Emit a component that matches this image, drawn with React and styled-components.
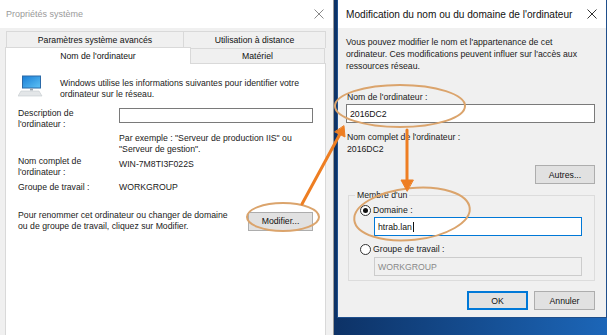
import React from 'react';
import styled, { createGlobalStyle } from 'styled-components';

const GlobalStyle = createGlobalStyle`
  html, body {
    margin: 0;
    padding: 0;
  }
  body {
    width: 607px;
    height: 335px;
    overflow: hidden;
    background: linear-gradient(90deg, #0a2450 0%, #0d3266 55%, #1c66b8 100%);
    font-family: "Liberation Sans", Arial, sans-serif;
    color: #1a1a1a;
  }
`;

const Desktop = styled.div`
  position: relative;
  display: flex;
  align-items: flex-start;
  gap: 3px;
  width: 607px;
  height: 335px;
`;

const Window = styled.div`
  display: flex;
  flex-direction: column;
  flex: 0 0 ${(p) => p.$w}px;
  height: ${(p) => p.$h}px;
  box-sizing: border-box;
  background: #f0f0f0;
  border-right: 1px solid ${(p) => p.$edge};
  border-left: ${(p) => (p.$framed ? `1px solid ${p.$edge}` : 'none')};
  border-bottom: ${(p) => (p.$framed ? `1px solid ${p.$edge}` : 'none')};
`;

const TitleBar = styled.div`
  display: flex;
  align-items: center;
  justify-content: space-between;
  height: 28px;
  flex: 0 0 28px;
  padding: 0 9px 0 ${(p) => (p.$inactive ? 6 : 8)}px;
  background: #fff;
  color: ${(p) => (p.$inactive ? '#9a9a9a' : '#111')};
  font-size: ${(p) => (p.$inactive ? 9 : 10.1)}px;
`;

const CloseIcon = ({ color }) => (
  <svg width="10" height="10" viewBox="0 0 10 10">
    <path d="M0.5 0.5 L9.5 9.5 M9.5 0.5 L0.5 9.5" stroke={color} strokeWidth="1" fill="none" />
  </svg>
);

const LeftBody = styled.div`
  display: flex;
  flex-direction: column;
  flex: 1;
  padding: 3px 7px 0 5px;
`;

const TabRow = styled.div`
  display: flex;
  height: ${(p) => p.$h}px;
  padding-left: ${(p) => p.$indent}px;
`;

const Tab = styled.div`
  flex: 0 0 ${(p) => p.$w}px;
  box-sizing: border-box;
  display: flex;
  align-items: center;
  justify-content: center;
  border: 1px solid #d9d9d9;
  border-bottom: none;
  margin-left: -1px;
  background: ${(p) => (p.$active ? '#fff' : '#f0f0f0')};
  font-size: 8.7px;
  color: #111;
  position: relative;
  z-index: ${(p) => (p.$active ? 2 : 1)};
  height: ${(p) => (p.$active ? 'calc(100% + 2px)' : '100%')};
  margin-top: ${(p) => (p.$active ? '-1px' : '0')};
  &:first-child {
    margin-left: 0;
  }
`;

const Panel = styled.div`
  flex: 1;
  background: #fff;
  border: 1px solid #d9d9d9;
  border-bottom: none;
  padding: 11px 12px 0 12px;
  font-size: 8.7px;
  line-height: 11px;
`;

const Intro = styled.div`
  display: flex;
  align-items: flex-start;
  gap: 16px;
`;

const IntroText = styled.div`
  padding-top: 3px;
`;

const FieldRow = styled.div`
  display: grid;
  grid-template-columns: 101px 1fr;
  margin-top: ${(p) => p.$mt}px;
`;

const Value = styled.div`
  padding-top: ${(p) => p.$pt || 0}px;
`;

const TextBox = styled.div`
  box-sizing: border-box;
  height: ${(p) => p.$h}px;
  border: 1px solid ${(p) => (p.$focus ? '#0078d7' : p.$disabled ? '#cccccc' : '#7a7a7a')};
  background: ${(p) => (p.$disabled ? '#f0f0f0' : '#fff')};
  color: ${(p) => (p.$disabled ? '#8a8a8a' : '#111')};
  padding: 0 3px;
  display: flex;
  align-items: center;
  font-size: 8.7px;
  margin-top: ${(p) => p.$mt || 0}px;
  margin-left: ${(p) => p.$ml || 0}px;
`;

const Caret = styled.span`
  display: inline-block;
  width: 1px;
  height: 10px;
  background: #111;
  margin-left: 1px;
`;

const RenameRow = styled.div`
  display: flex;
  align-items: center;
  justify-content: space-between;
  margin-top: 17px;
`;

const Button = styled.div`
  box-sizing: border-box;
  flex: 0 0 ${(p) => p.$w}px;
  width: ${(p) => p.$w}px;
  height: ${(p) => p.$h}px;
  display: flex;
  align-items: center;
  justify-content: center;
  background: #e1e1e1;
  border: 1px solid ${(p) => (p.$default ? '#0078d7' : '#adadad')};
  box-shadow: ${(p) => (p.$default ? 'inset 0 0 0 1px #0078d7' : 'none')};
  font-size: 8.7px;
  color: #111;
`;

const RightBody = styled.div`
  display: flex;
  flex-direction: column;
  flex: 1;
  padding: 8px 11px 0 8px;
  font-size: 8.7px;
  line-height: 12px;
`;

const Block = styled.div`
  margin-top: ${(p) => p.$mt || 0}px;
  padding-left: ${(p) => p.$pl || 0}px;
`;

const RightAlign = styled.div`
  display: flex;
  justify-content: flex-end;
  gap: 6px;
  margin-top: ${(p) => p.$mt}px;
`;

const GroupBox = styled.fieldset`
  margin: 5px 0 0 2px;
  padding: 0 12px 10px 11px;
  border: 1px solid #dcdcdc;
  height: 92px;
  box-sizing: border-box;
`;

const Legend = styled.legend`
  padding: 0 2px;
  margin-left: -5px;
  font-size: 8.7px;
`;

const RadioLine = styled.div`
  display: flex;
  align-items: center;
  gap: 2px;
  height: 12px;
  margin-top: ${(p) => p.$mt}px;
`;

const RadioDot = styled.span`
  box-sizing: border-box;
  width: 11px;
  height: 11px;
  border-radius: 50%;
  border: 1px solid #333;
  background: #fff;
  display: flex;
  align-items: center;
  justify-content: center;
  &::after {
    content: '';
    width: 5px;
    height: 5px;
    border-radius: 50%;
    background: ${(p) => (p.$on ? '#111' : 'transparent')};
  }
`;

const Overlay = styled.svg`
  position: absolute;
  left: 0;
  top: 0;
  pointer-events: none;
`;

const ComputerIcon = () => (
  <svg width="26" height="22" viewBox="0 0 26 22">
    <defs>
      <linearGradient id="scr" x1="0" y1="0" x2="1" y2="1">
        <stop offset="0" stopColor="#1b7fd6" />
        <stop offset="1" stopColor="#5cc0f4" />
      </linearGradient>
    </defs>
    <rect x="4" y="0.5" width="19" height="13" fill="#2b6aa8" />
    <rect x="5" y="1.5" width="17" height="11" fill="url(#scr)" />
    <rect x="12" y="13.5" width="3" height="2" fill="#9aa4ad" />
    <path d="M3 16 L21 16 L24 21 L0 21 Z" fill="#e3e6e8" stroke="#c4c9cd" strokeWidth="0.6" />
  </svg>
);

const Annotations = () => (
  <Overlay width="607" height="335" viewBox="0 0 607 335">
    <g fill="none" stroke="#dba46c" strokeWidth="2">
      <ellipse cx="400" cy="106" rx="65" ry="21" />
      <ellipse cx="412" cy="214" rx="58" ry="26" transform="rotate(-6 412 214)" />
      <ellipse cx="283" cy="217" rx="36" ry="14" />
    </g>
    <g stroke="#ee7e22" strokeWidth="3" fill="#ee7e22" strokeLinecap="round">
      <line x1="302" y1="204" x2="340" y2="134" />
      <polygon points="344,126 345,137 335,132" strokeWidth="1" />
      <line x1="407" y1="130" x2="407" y2="180" />
      <polygon points="407,191 401,180 413,180" strokeWidth="1" />
    </g>
  </Overlay>
);

export default function App() {
  return (
    <>
      <GlobalStyle />
      <Desktop>
        <Window $w={334} $h={335} $edge="#9a9a9a">
          <TitleBar $inactive>
            <span>Propriétés système</span>
            <CloseIcon color="#8a8a8a" />
          </TitleBar>
          <LeftBody>
            <TabRow $h={17} $indent={1}>
              <Tab $w={178}>Paramètres système avancés</Tab>
              <Tab $w={143}>Utilisation à distance</Tab>
            </TabRow>
            <TabRow $h={15} $indent={0}>
              <Tab $w={186} $active>Nom de l&apos;ordinateur</Tab>
              <Tab $w={135}>Matériel</Tab>
            </TabRow>
            <Panel>
              <Intro>
                <ComputerIcon />
                <IntroText>
                  Windows utilise les informations suivantes pour identifier votre
                  <br />
                  ordinateur sur le réseau.
                </IntroText>
              </Intro>
              <FieldRow $mt={8}>
                <div>
                  Description de
                  <br />
                  l&apos;ordinateur :
                </div>
                <TextBox $h={15} />
              </FieldRow>
              <FieldRow $mt={3}>
                <span />
                <div>
                  Par exemple : &quot;Serveur de production IIS&quot; ou
                  <br />
                  &quot;Serveur de gestion&quot;.
                </div>
              </FieldRow>
              <FieldRow $mt={1}>
                <div>
                  Nom complet de
                  <br />
                  l&apos;ordinateur :
                </div>
                <Value $pt={3}>WIN-7M8TI3F022S</Value>
              </FieldRow>
              <FieldRow $mt={4}>
                <div>Groupe de travail :</div>
                <Value>WORKGROUP</Value>
              </FieldRow>
              <RenameRow>
                <div>
                  Pour renommer cet ordinateur ou changer de domaine
                  <br />
                  ou de groupe de travail, cliquez sur Modifier.
                </div>
                <Button $w={65} $h={19}>Modifier...</Button>
              </RenameRow>
            </Panel>
          </LeftBody>
        </Window>

        <Window $w={270} $h={318} $edge="#1f4f8c" $framed>
          <TitleBar>
            <span>Modification du nom ou du domaine de l&apos;ordinateur</span>
            <CloseIcon color="#333" />
          </TitleBar>
          <RightBody>
            <Block>
              Vous pouvez modifier le nom et l&apos;appartenance de cet
              <br />
              ordinateur. Ces modifications peuvent influer sur l&apos;accès aux
              <br />
              ressources réseau.
            </Block>
            <Block $mt={19} $pl={1}>Nom de l&apos;ordinateur :</Block>
            <TextBox $h={19} $mt={1}>2016DC2</TextBox>
            <Block $mt={8} $pl={1}>
              Nom complet de l&apos;ordinateur :
              <br />
              2016DC2
            </Block>
            <RightAlign $mt={10}>
              <Button $w={60} $h={19}>Autres...</Button>
            </RightAlign>
            <GroupBox>
              <Legend>Membre d&apos;un</Legend>
              <RadioLine $mt={3}>
                <RadioDot $on />
                <span>Domaine :</span>
              </RadioLine>
              <TextBox $h={19} $mt={1} $ml={14} $focus>
                htrab.lan
                <Caret />
              </TextBox>
              <RadioLine $mt={7}>
                <RadioDot />
                <span>Groupe de travail :</span>
              </RadioLine>
              <TextBox $h={19} $mt={2} $ml={14} $disabled>WORKGROUP</TextBox>
            </GroupBox>
            <RightAlign $mt={10}>
              <Button $w={61} $h={19} $default>OK</Button>
              <Button $w={61} $h={19}>Annuler</Button>
            </RightAlign>
          </RightBody>
        </Window>
        <Annotations />
      </Desktop>
    </>
  );
}
